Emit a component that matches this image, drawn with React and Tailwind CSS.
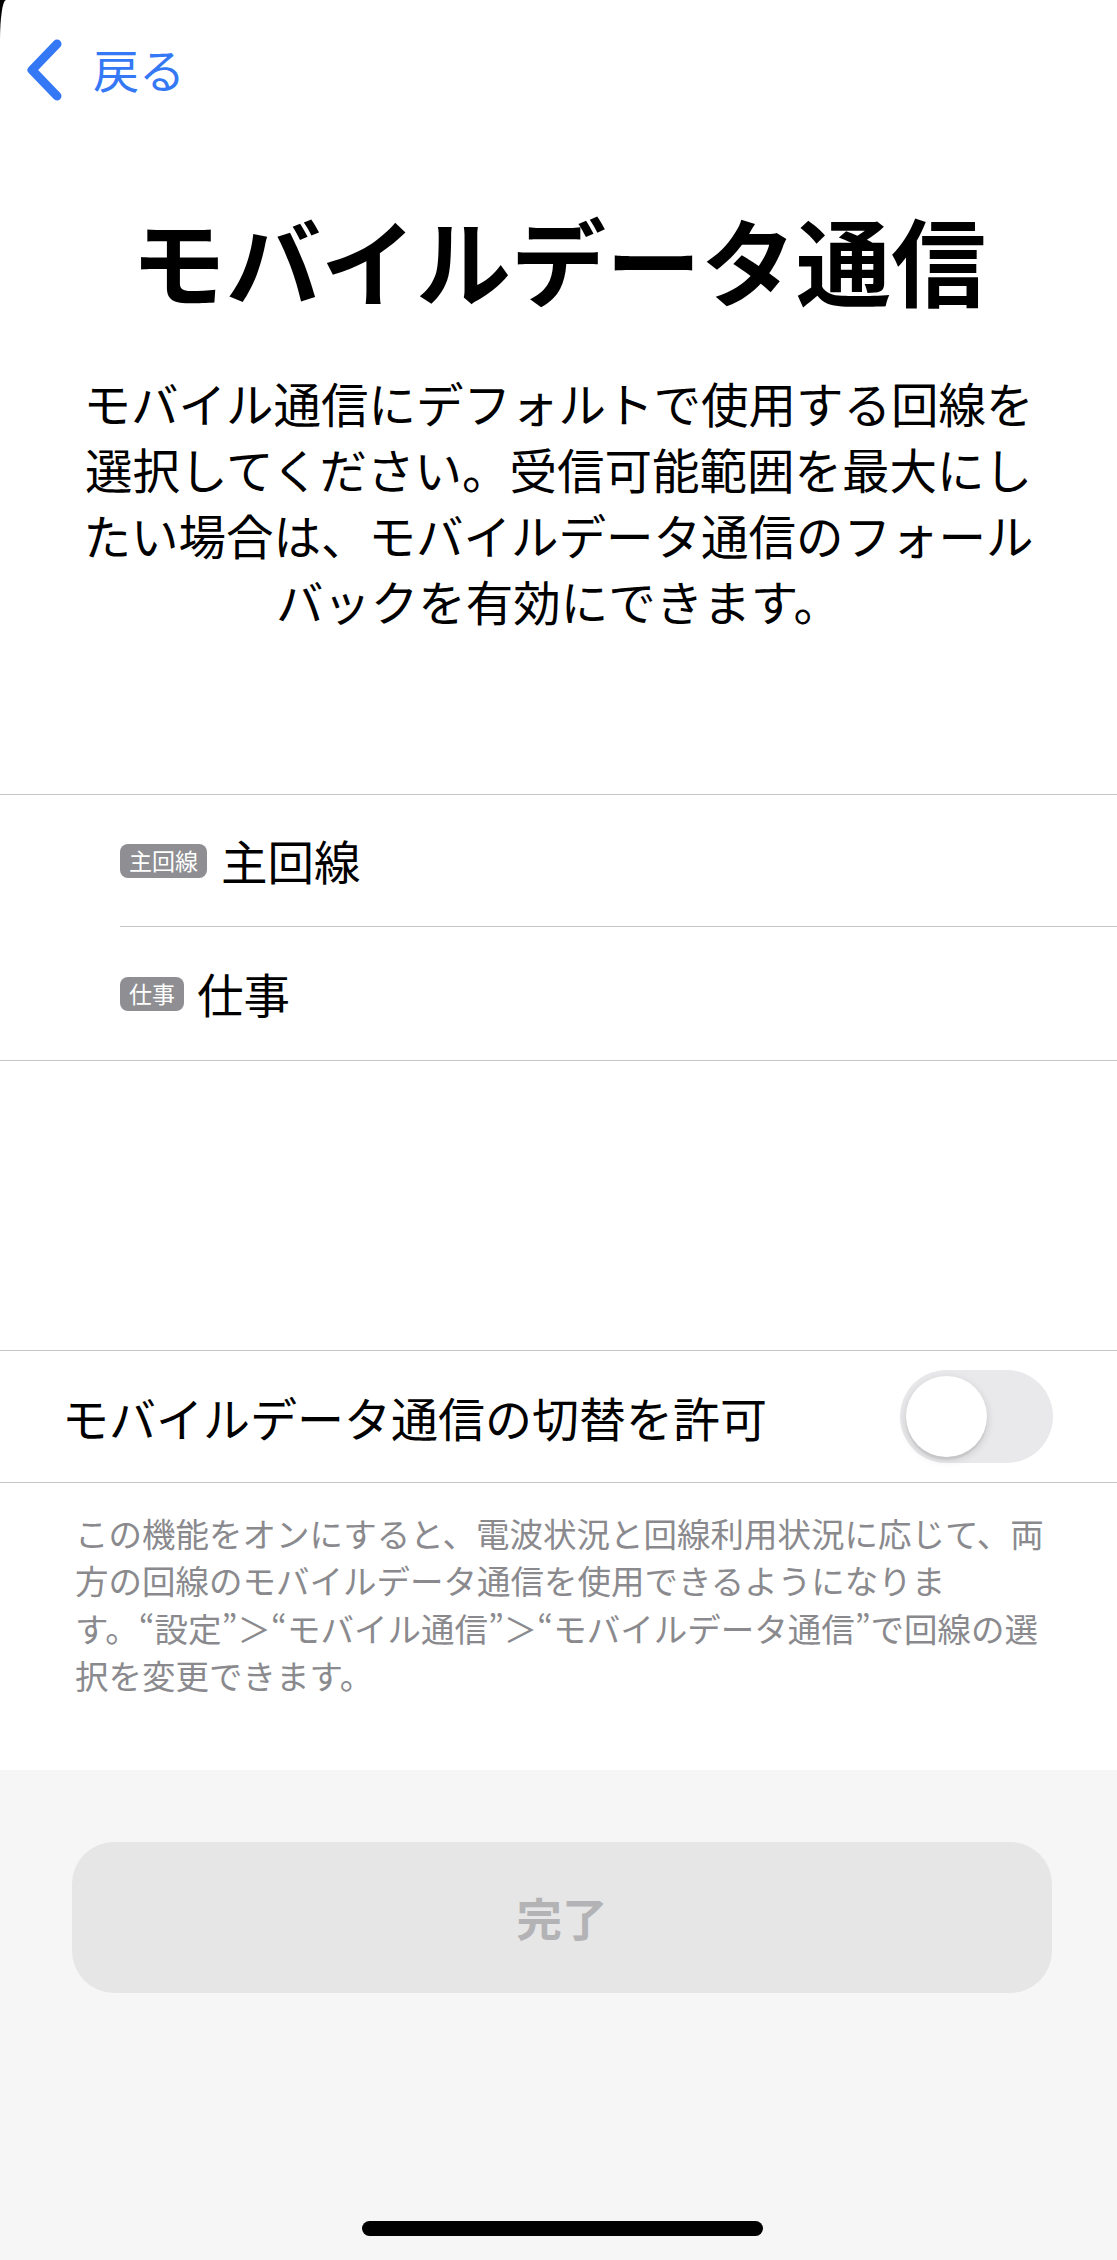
import React from "react";

function Chevron() {
  return (
    <svg width="40" height="62" viewBox="0 0 40 62" fill="none">
      <path d="M33 5 L8 31 L33 57" stroke="#3478f6" strokeWidth="9" strokeLinecap="round" strokeLinejoin="round" />
    </svg>
  );
}

function Badge({ children }) {
  return (
    <span className="inline-flex h-[34px] items-center rounded-[8px] bg-[#8e8e93] px-[9px] text-[23px] leading-none text-white">
      {children}
    </span>
  );
}

export default function App() {
  return (
    <div className="w-[1117px] h-[2260px] bg-black font-['Noto_Sans_CJK_JP',sans-serif]" lang="ja">
      <div className="flex h-full flex-col overflow-hidden rounded-tl-[6px_40px] bg-white">
        {/* Nav */}
        <div className="flex h-[140px] shrink-0 items-center pl-[24px]">
          <Chevron />
          <span className="ml-[29px] -mt-[4px] text-[46px] leading-none text-[#3478f6]">戻る</span>
        </div>

        {/* Title */}
        <h1 className="mt-[62px] text-center text-[95px] font-bold leading-[113px] text-black">
          モバイルデータ通信
        </h1>

        {/* Description */}
        <p className="mt-[55px] text-center text-[47.5px] leading-[66px] text-black">
          モバイル通信にデフォルトで使用する回線を
          <br />
          選択してください。受信可能範囲を最大にし
          <br />
          たい場合は、モバイルデータ通信のフォール
          <br />
          バックを有効にできます。
        </p>

        {/* Lines list */}
        <div className="mt-[160px] border-y border-[#c6c6c8]">
          <div className="pl-[120px]">
            <div className="flex h-[132px] items-center gap-[14px] border-b border-[#c6c6c8]">
              <Badge>主回線</Badge>
              <span className="text-[46.5px] leading-none text-black">主回線</span>
            </div>
            <div className="flex h-[133px] items-center gap-[13px]">
              <Badge>仕事</Badge>
              <span className="text-[46.5px] leading-none text-black">仕事</span>
            </div>
          </div>
        </div>

        {/* Toggle row */}
        <div className="mt-[289px] flex h-[133px] items-center justify-between border-y border-[#c6c6c8] pl-[62px] pr-[64px]">
          <span className="text-[47px] leading-none text-black">モバイルデータ通信の切替を許可</span>
          <div className="flex h-[93px] w-[153px] items-center rounded-full bg-[#e9e9eb] px-[6px]">
            <div className="h-[81px] w-[81px] rounded-full bg-white shadow-[0_3px_8px_rgba(0,0,0,0.15),0_3px_1px_rgba(0,0,0,0.06)]" />
          </div>
        </div>

        {/* Footer note */}
        <p className="mt-[26px] pl-[75px] pr-[60px] text-[33.5px] leading-[47.3px] text-[#8a8a8e]">
          この機能をオンにすると、電波状況と回線利用状況に応じて、両
          <br />
          方の回線のモバイルデータ通信を使用できるようになりま
          <br />
          す。“設定”＞“モバイル通信”＞“モバイルデータ通信”で回線の選
          <br />
          択を変更できます。
        </p>

        {/* Bottom area */}
        <div className="mt-auto flex h-[490px] shrink-0 flex-col bg-[#f6f6f6]">
          <div className="ml-[72px] mt-[72px] flex h-[151px] w-[980px] items-center justify-center rounded-[42px] bg-[#e6e6e7]">
            <span className="text-[45.5px] font-bold leading-none text-[#b3b3b6]">完了</span>
          </div>
          <div className="ml-[362px] mt-auto mb-[24px] h-[15px] w-[401px] rounded-full bg-black" />
        </div>
      </div>
    </div>
  );
}
